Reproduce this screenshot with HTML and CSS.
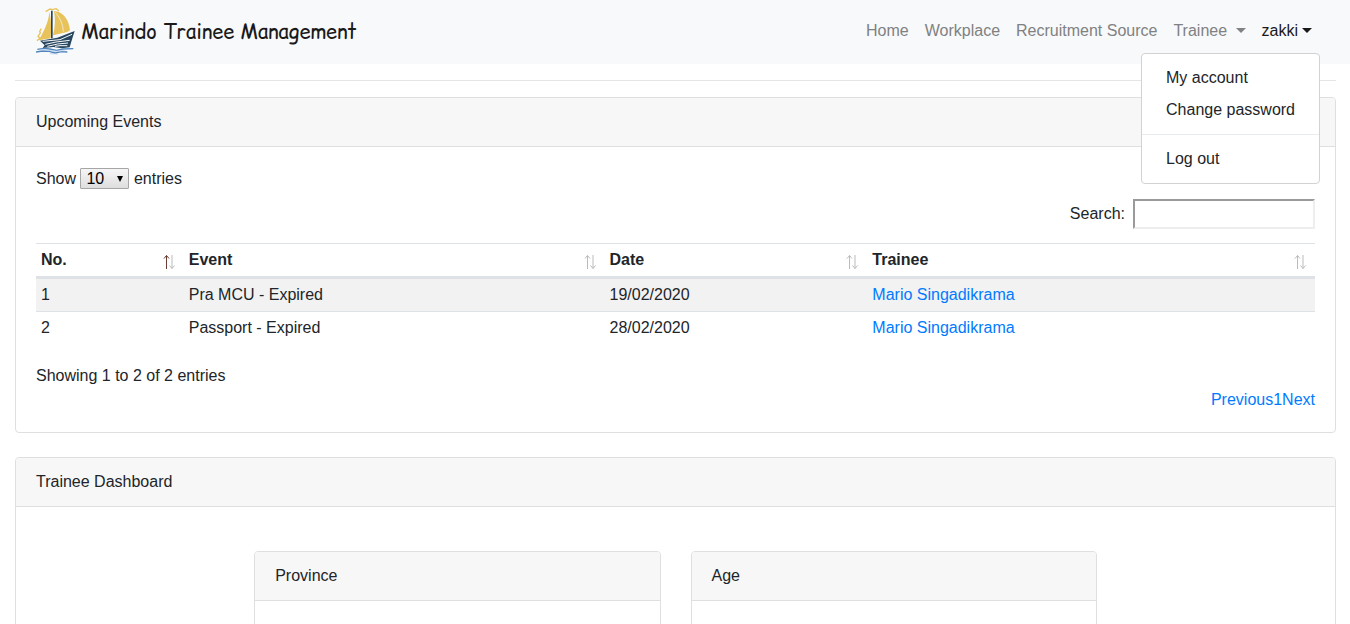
FILE: index.html
```html
<!DOCTYPE html>
<html lang="en">
<head>
<meta charset="utf-8">
<meta name="viewport" content="width=device-width, initial-scale=1">
<title>Marindo Trainee Management</title>
<link rel="stylesheet" href="styles.css">
</head>
<body>
<svg class="defs" aria-hidden="true">
  <symbol id="sort" viewBox="0 0 12 16">
    <path class="up" fill="none" d="M3.500 1.500V15M1 4.500L3.500 1.500L6 4.500"/>
    <path fill="none" d="M9 1V14.500M6.500 11.500L9 14.500L11.500 11.500"/>
  </symbol>
</svg>
<header class="navbar">
  <a class="brand" href="#">
    <svg class="logo" viewBox="18 12 117 144" aria-hidden="true">
      <path fill="#e8c35b" d="M58 24C57 50 42 82 26 109L62 103C64 75 64 45 58 24Z"/>
      <path fill="#e8c35b" d="M72 21C97 22 117 45 120 79L112 84L69 94C76 68 76 44 72 21Z"/>
      <path fill="none" stroke="#e8c35b" stroke-width="4" d="M47 23L60 15L68 17L78 14L87 21M34 74L29 82L31 87L24 97L30 102L21 110"/>
      <path fill="none" stroke="#f8f9fa" stroke-width="2" d="M76 25C91 42 99 63 100 83"/>
      <path fill="#27465f" d="M63 20H68L68 103H63Z"/>
      <path fill="#27465f" d="M30 110L82 101L134 81L128 100L119 130L96 133L70 129L38 132L44 124Z"/>
      <path fill="none" stroke="#f8f9fa" stroke-width="3" d="M38 112L90 107L126 91M46 121L78 114L119 109M52 127L83 120L114 117M75 127L90 125L112 125"/>
      <path fill="none" stroke="#4f84bd" stroke-width="4" d="M22 136L42 133L59 135L80 139L99 135L130 134M18 144L38 141L58 142L75 147L95 143L112 144"/>
      <path fill="none" stroke="#a9c5e2" stroke-width="2" d="M34 138L56 139L73 142L104 140M60 149L84 150"/>
    </svg>
    <span>Marindo Trainee Management</span>
  </a>
  <nav>
    <ul class="nav">
      <li><a href="#">Home</a></li>
      <li><a href="#">Workplace</a></li>
      <li><a href="#">Recruitment Source</a></li>
      <li><a href="#">Trainee <span class="caret"></span></a></li>
      <li class="dropdown">
        <a class="active" href="#" aria-expanded="true">zakki<span class="caret"></span></a>
        <div class="menu">
          <a href="#">My account</a>
          <a href="#">Change password</a>
          <hr>
          <a href="#">Log out</a>
        </div>
      </li>
    </ul>
  </nav>
</header>
<main class="container">
  <hr class="rule">
  <section class="card">
    <h2 class="card-header">Upcoming Events</h2>
    <div class="card-body">
      <label class="length">Show
        <select><option>10</option><option>25</option><option>50</option><option>100</option></select>
        entries</label>
      <label class="search"><span>Search:</span><input type="search"></label>
      <table class="events">
        <thead>
          <tr>
            <th class="col-no" scope="col" aria-sort="ascending"><button type="button">No.<svg class="sort asc" aria-hidden="true"><use href="#sort"/></svg></button></th>
            <th class="col-event" scope="col"><button type="button">Event<svg class="sort" aria-hidden="true"><use href="#sort"/></svg></button></th>
            <th class="col-date" scope="col"><button type="button">Date<svg class="sort" aria-hidden="true"><use href="#sort"/></svg></button></th>
            <th class="col-trainee" scope="col"><button type="button">Trainee<svg class="sort" aria-hidden="true"><use href="#sort"/></svg></button></th>
          </tr>
        </thead>
        <tbody>
          <tr><td>1</td><td>Pra MCU - Expired</td><td>19/02/2020</td><td><a href="#">Mario Singadikrama</a></td></tr>
          <tr><td>2</td><td>Passport - Expired</td><td>28/02/2020</td><td><a href="#">Mario Singadikrama</a></td></tr>
        </tbody>
      </table>
      <div class="info">Showing 1 to 2 of 2 entries</div>
      <div class="pager"><a href="#">Previous</a><a href="#">1</a><a href="#">Next</a></div>
    </div>
  </section>
  <section class="card">
    <h2 class="card-header">Trainee Dashboard</h2>
    <div class="card-body">
      <div class="row">
        <div class="col"><section class="card"><h3 class="card-header">Province</h3><div class="card-body chart"></div></section></div>
        <div class="col"><section class="card"><h3 class="card-header">Age</h3><div class="card-body chart"></div></section></div>
      </div>
    </div>
  </section>
</main>
</body>
</html>
```
FILE: styles.css
```css
* { box-sizing: border-box; }
html { overflow-x: hidden; scrollbar-width: none; }
body {
  margin: 0;
  font: 16px/24px "Liberation Sans", Arial, sans-serif;
  color: #212529;
  background: #fff;
}
a { color: #007bff; text-decoration: none; }
.defs { display: none; }

.navbar {
  display: flex;
  align-items: center;
  justify-content: space-between;
  padding: 8px 30px 8px 36px;
  background: #f8f9fa;
}
.brand {
  display: flex;
  align-items: center;
  gap: 6px;
  font-family: "Comic Relief", "Comic Sans MS", sans-serif;
  font-size: 20px;
  color: #1a1a1a;
  white-space: nowrap;
}
.logo { width: 39px; height: 48px; }
.nav {
  display: flex;
  margin: 0 0 2px;
  padding: 0;
  list-style: none;
}
.nav > li > a {
  display: flex;
  align-items: center;
  padding: 8px;
  color: #808182;
  white-space: pre;
}
.nav > li > a.active { color: #1a1a1a; }
.caret {
  margin: 0 0 2px 4px;
  border: 5px solid transparent;
  border-top-color: currentColor;
  border-bottom: 0;
}
.dropdown { position: relative; }
.menu {
  position: absolute;
  top: calc(100% + 2px);
  right: 0;
  z-index: 10;
  padding: 8px 0;
  border: 1px solid #d2d2d2;
  border-radius: 4px;
  background: #fff;
}
.menu a {
  display: block;
  padding: 4px 24px;
  color: #212529;
  white-space: nowrap;
}
.menu hr {
  margin: 8px 0;
  border: 0;
  border-top: 1px solid #e9ecef;
}

.container { padding: 0 14px 0 15px; }
.rule {
  margin: 16px 0;
  border: 0;
  border-top: 1px solid #e5e5e5;
}
.card {
  margin-bottom: 24px;
  border: 1px solid #dfdfdf;
  border-radius: 4px;
  background: #fff;
}
.card-header {
  margin: 0;
  padding: 12px 20px;
  border-bottom: 1px solid #dfdfdf;
  border-radius: 3px 3px 0 0;
  background: #f7f7f7;
  font-size: 16px;
  font-weight: 400;
}
.card-body { padding: 20px; }

.length { display: block; margin-bottom: 8px; }
.length select {
  appearance: none;
  width: 49px;
  height: 21px;
  padding: 0 5px;
  border: 1px solid #a6a6a6;
  border-radius: 1px;
  background: url("data:image/svg+xml,%3Csvg xmlns='http://www.w3.org/2000/svg' width='6' height='6'%3E%3Cpath d='M0 0H6L3 6Z'/%3E%3C/svg%3E") right 5px center no-repeat, linear-gradient(#f6f6f6, #dedede);
  font: inherit;
  line-height: 19px;
  color: #000;
}
.search {
  display: flex;
  align-items: center;
  justify-content: flex-end;
  gap: 8px;
  margin-bottom: 14px;
}
.search input {
  width: 182px;
  height: 30px;
  padding: 1px 4px;
  border: 2px solid;
  border-color: #9a9a9a #eee #eee #9a9a9a;
  background: #fff;
  font: inherit;
}

.events {
  width: 100%;
  margin-bottom: 20px;
  border-spacing: 0;
  table-layout: fixed;
}
.events th, .events td {
  padding: 4px 5px;
  border-top: 1px solid #dee2e6;
  text-align: left;
}
.events th { border-bottom: 2px solid #dee2e6; }
.events tbody tr:nth-child(odd) { background: #f2f2f2; }
.events button {
  display: flex;
  justify-content: space-between;
  width: 100%;
  padding: 0 4px 0 0;
  border: 0;
  background: none;
  font: inherit;
  font-weight: 700;
  color: inherit;
}
.col-no { width: 11.55%; }
.col-event { width: 32.9%; }
.col-date { width: 20.55%; }
.sort { width: 12px; height: 16px; margin-top: 6px; --up: #bbb; stroke: #bbb; }
.up { stroke: var(--up); }
.asc { --up: #6b3a32; }
.pager { display: flex; justify-content: flex-end; }

.row {
  display: flex;
  justify-content: center;
  margin: 24px -15px 0;
}
.col { flex: 0 0 33.333%; padding: 0 15px; }
.chart { min-height: 240px; }
```
